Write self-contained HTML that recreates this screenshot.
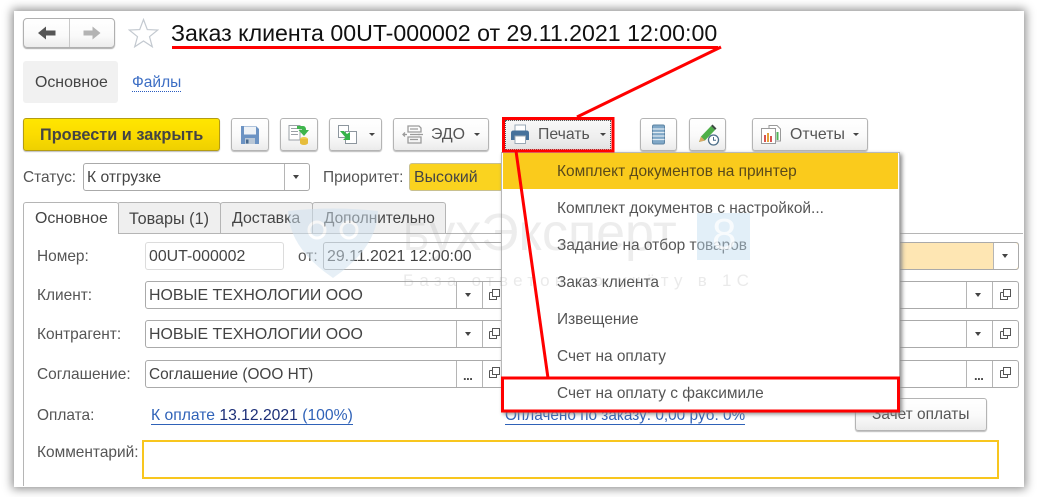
<!DOCTYPE html>
<html><head><meta charset="utf-8">
<style>
*{box-sizing:border-box}
html,body{margin:0;padding:0;width:1038px;height:497px;overflow:hidden;background:#fff}
body{position:relative;font-family:"Liberation Sans",sans-serif;font-size:15.500px;color:#4a4a4a}
.a{position:absolute}
.t{position:absolute;white-space:nowrap;line-height:18px;height:18px}
.val{font-size:15.900px;color:#444}
.btn{position:absolute;top:118px;height:33px;border:1px solid #b4b4b4;border-radius:3px;background:linear-gradient(#fff 0%,#fafafa 55%,#ebebeb 100%);box-shadow:0 1px 1px #bbb}
.f{position:absolute;height:28px;border:1px solid #aaa;border-radius:3px;background:#fff}
.v{position:absolute;top:0;bottom:0;width:1px;background:#b5b5b5}
.tri{position:absolute;width:0;height:0;border-left:3.500px solid transparent;border-right:3.500px solid transparent;border-top:4px solid #444}
.tr2{position:absolute;width:0;height:0;border-left:3px solid transparent;border-right:3px solid transparent;border-top:3px solid #444}
.tab{position:absolute;top:202px;height:31px;border:1px solid #b5b5b5;border-bottom:none;border-radius:3px 3px 0 0;background:#efefef}
.m{position:absolute;left:557px;white-space:nowrap;line-height:18px;color:#555;font-size:15.450px}
.lbl{color:#555;font-size:15.450px}
</style></head><body>

<!-- window -->
<div class="a" style="left:14px;top:11px;width:1010px;height:476px;background:#fff;box-shadow:0 0 9px 2px #8f8f8f"></div>

<!-- nav -->
<div class="a" style="left:23px;top:18px;width:92px;height:30px;border:1px solid #b0b0b0;border-radius:4px;background:linear-gradient(#fff,#fafafa 60%,#ececec);box-shadow:0 1px 1px #aaa"></div>
<div class="a" style="left:69px;top:19px;width:1px;height:28px;background:#c8c8c8"></div>
<svg class="a" style="left:36px;top:24px" width="22" height="18"><path d="M2 9 L10 2.500 V6.500 H19.500 V11.500 H10 V15.500 Z" fill="#555"/></svg>
<svg class="a" style="left:81px;top:24px" width="22" height="18"><path d="M19.500 9 L11.500 2.500 V6.500 H2.500 V11.500 H11.500 V15.500 Z" fill="#b3b3b3"/></svg>
<svg class="a" style="left:128px;top:18px" width="31" height="30"><path d="M15.500 1.500 L19.300 11.600 L29.800 12 L21.500 18.700 L24.300 28.800 L15.500 23 L6.700 28.800 L9.500 18.700 L1.200 12 L11.700 11.600 Z" fill="#fff" stroke="#c3c9d0" stroke-width="1.200"/></svg>

<!-- title -->
<div class="t" id="title" style="left:171px;top:20px;height:26px;line-height:26px;font-size:23.170px;color:#111">Заказ клиента 00UT-000002 от 29.11.2021 12:00:00</div>

<!-- section tabs -->
<div class="a" style="left:23px;top:61px;width:95px;height:42px;background:#f1f1f1;border-radius:3px"></div>
<div class="t val" style="left:35px;top:74px">Основное</div>
<div class="t" style="left:132px;top:74px;color:#3c6ec4;border-bottom:1px dotted #2a5cc0;height:18px;font-size:15.500px">Файлы</div>

<!-- toolbar -->
<div class="a" style="left:23px;top:118px;width:197px;height:33px;border:1px solid #b49c12;border-radius:3px;background:linear-gradient(#ffe600,#fbdc00 50%,#eed000);box-shadow:0 1px 1px #bbb"></div>
<div class="t" style="left:40px;top:126px;font-weight:bold;font-size:16.300px;color:#444">Провести и закрыть</div>

<div class="btn" style="left:231px;width:38px"></div>
<svg class="a" style="left:240px;top:125px" width="20" height="20"><path d="M1 1 H16 L19 4 V19 H1 Z" fill="#6c93c3"/><rect x="4" y="1.500" width="12" height="8" fill="#eef2f6"/><rect x="5" y="13" width="10" height="6" fill="#b9c7d6"/><rect x="6" y="14.500" width="2.500" height="4" fill="#47698f"/></svg>

<div class="btn" style="left:280px;width:38px"></div>
<svg class="a" style="left:288px;top:124px" width="24" height="22"><path d="M1 1.500 H12 V16 H1 Z" fill="#fff" stroke="#9aa0a6"/><path d="M3 4.500H10M3 7.500H10M3 10.500H10" stroke="#9aa0a6"/><path d="M9 2 H15 Q18 2 18 6 H21 L16 12 L10.500 6 H14 Q14 5 12 5 H9 Z" fill="#3fb54d"/><ellipse cx="16" cy="15" rx="4" ry="2" fill="#f0cd4e"/><path d="M12 15 V19 A4 2 0 0 0 20 19 V15 Z" fill="#e6bd3c"/></svg>

<div class="btn" style="left:329px;width:53px"></div>
<svg class="a" style="left:337px;top:124px" width="24" height="22"><rect x="1.500" y="1.500" width="10" height="12" fill="#fff" stroke="#8d969e"/><rect x="8.500" y="7.500" width="11" height="12" fill="#fff" stroke="#8d969e"/><path d="M3 7 H7 L10 10 L13 8 V16 H6 L8.500 13.500 Z" fill="#36b34a"/></svg>
<div class="tr2" style="left:369px;top:133px"></div>

<div class="btn" style="left:393px;width:96px"></div>
<svg class="a" style="left:402px;top:124px" width="22" height="22" fill="none" stroke="#9b9b9b" stroke-width="1.300"><path d="M6 2 H17 L19 4 V8 H6 Z M6 13 H19 V19 H6 Z M8 5 H16 M8 15.500 H16 M8 10.500 H18"/><path d="M1 10.500 H5 M3 8.500 L1 10.500 L3 12.500 M16 10.500 H21"/></svg>
<div class="t" style="left:431px;top:126px;color:#555;font-size:15.900px">ЭДО</div>
<div class="tr2" style="left:474px;top:133px"></div>

<div class="btn" style="left:505px;top:120px;width:106px;height:30px;border:1px dotted #555;background:linear-gradient(#f8f8f8,#eeeeee 60%,#e2e2e2);box-shadow:none;border-radius:0"></div>
<svg class="a" style="left:510px;top:124px" width="21" height="21"><rect x="5" y="1" width="10.500" height="7" fill="#fff" stroke="#9aa8b5"/><path d="M1 9 Q1 6.500 3.500 6.500 H16.500 Q19 6.500 19 9 V16 H1 Z" fill="#46719b"/><rect x="5" y="12" width="10.500" height="7.500" fill="#fff" stroke="#9aa8b5"/></svg>
<div class="t" style="left:538px;top:126px;color:#555;font-size:15.800px">Печать</div>
<div class="tr2" style="left:600px;top:133px"></div>

<div class="btn" style="left:640px;width:37px"></div>
<svg class="a" style="left:651px;top:124px" width="16" height="21"><rect x="1.500" y="1" width="12" height="19" rx="1.500" fill="#7fa7c7" stroke="#5d84a3"/><path d="M1.500 5H13.500M1.500 8.500H13.500M1.500 12H13.500M1.500 15.500H13.500" stroke="#dfeaf2" stroke-width="1.200"/></svg>

<div class="btn" style="left:689px;width:37px"></div>
<svg class="a" style="left:697px;top:123px" width="24" height="24"><path d="M2 19 L4 13.500 L14 3 L18 7 L8 17.500 Z" fill="#4eaf48"/><path d="M2 19 L4 13.500 L8 17.500 Z" fill="#d9a765"/><path d="M14 3 L15.500 1.500 L19.500 5.500 L18 7 Z" fill="#3d4a42"/><circle cx="16.500" cy="17" r="5" fill="#fff" stroke="#4b6d88" stroke-width="1.300"/><path d="M16.500 14V17.300H19" stroke="#4b6d88" fill="none"/></svg>

<div class="btn" style="left:752px;width:116px"></div>
<svg class="a" style="left:760px;top:124px" width="24" height="22"><path d="M9 1.500 H17 L20.500 5 V17 H9 Z" fill="#fff" stroke="#9a9a9a"/><rect x="1.500" y="4.500" width="14" height="15" fill="#fff" stroke="#9a9a9a"/><rect x="4" y="11" width="2" height="7" fill="#d9534f"/><rect x="7" y="9" width="2" height="9" fill="#e3a03a"/><rect x="10" y="12" width="2" height="6" fill="#d9534f"/><rect x="16.500" y="8" width="2" height="8" fill="#4fb35a"/></svg>
<div class="t" style="left:790px;top:126px;color:#555;font-size:15.900px">Отчеты</div>
<div class="tr2" style="left:853px;top:133px"></div>

<!-- status -->
<div class="t lbl" style="left:23px;top:169px">Статус:</div>
<div class="f" style="left:83px;top:163px;width:227px"><div class="v" style="left:200px"></div><div class="tri" style="left:209px;top:11px"></div></div>
<div class="t val" style="left:87px;top:169px;font-size:15.700px">К отгрузке</div>
<div class="t lbl" style="left:323px;top:169px">Приоритет:</div>
<div class="f" style="left:409px;top:163px;width:100px;background:#fad31f;border-color:#c8c090"></div>
<div class="t val" style="left:414px;top:169px">Высокий</div>

<!-- tabs -->
<div class="a" style="left:23px;top:233px;width:1000px;height:1px;background:#b5b5b5"></div>
<div class="a" style="left:23px;top:233px;width:1px;height:253px;background:#b5b5b5"></div>
<div class="tab" style="left:117px;width:104px"></div>
<div class="tab" style="left:220px;width:93px"></div>
<div class="tab" style="left:312px;width:134px"></div>
<div class="tab" style="left:23px;width:96px;height:32px;background:#fff"></div>
<div class="t val" style="left:35px;top:210px">Основное</div>
<div class="t val" style="left:129px;top:210px;font-size:16.200px">Товары (1)</div>
<div class="t val" style="left:232px;top:210px">Доставка</div>
<div class="t val" style="left:324px;top:210px;font-size:15.400px">Дополнительно</div>

<!-- form -->
<div class="t lbl" style="left:37px;top:248px">Номер:</div>
<div class="f" style="left:145px;top:242px;width:139px;border-color:#dcdcdc"></div>
<div class="t val" style="left:149px;top:248px">00UT-000002</div>
<div class="t lbl" style="left:298px;top:248px">от:</div>
<div class="f" style="left:323px;top:242px;width:190px"></div>
<div class="t val" style="left:327px;top:248px">29.11.2021 12:00:00</div>
<div class="f" style="left:880px;top:242px;width:139px;background:#fee6b3"><div class="a" style="left:112px;top:0;right:0;bottom:0;background:#fff;border-left:1px solid #b5b5b5;border-radius:0 3px 3px 0"></div><div class="tri" style="left:121px;top:11px"></div></div>

<div class="t lbl" style="left:37px;top:287px">Клиент:</div>
<div class="f" style="left:145px;top:281px;width:370px"><div class="v" style="left:310px"></div><div class="v" style="left:336px"></div><div class="tri" style="left:319px;top:11px"></div></div>
<div class="t val" style="left:149px;top:287px">НОВЫЕ ТЕХНОЛОГИИ ООО</div>
<svg class="a" style="left:488px;top:288px" width="13" height="13" fill="none" stroke="#555"><path d="M4.500 1.500H11.500V8.500H4.500Z M1.500 4.500H4.500 M1.500 4.500V11.500H8.500V8.500"/></svg>

<div class="t lbl" style="left:37px;top:326px">Контрагент:</div>
<div class="f" style="left:145px;top:320px;width:370px"><div class="v" style="left:310px"></div><div class="v" style="left:336px"></div><div class="tri" style="left:319px;top:11px"></div></div>
<div class="t val" style="left:149px;top:326px">НОВЫЕ ТЕХНОЛОГИИ ООО</div>
<svg class="a" style="left:488px;top:327px" width="13" height="13" fill="none" stroke="#555"><path d="M4.500 1.500H11.500V8.500H4.500Z M1.500 4.500H4.500 M1.500 4.500V11.500H8.500V8.500"/></svg>

<div class="t lbl" style="left:37px;top:366px">Соглашение:</div>
<div class="f" style="left:145px;top:360px;width:370px"><div class="v" style="left:310px"></div><div class="v" style="left:336px"></div></div>
<div class="t val" style="left:149px;top:366px;font-size:15.400px">Соглашение (ООО НТ)</div>
<div class="t" style="left:463px;top:367px;color:#444;font-weight:bold;font-size:13px;letter-spacing:-.5px">...</div>
<svg class="a" style="left:488px;top:366px" width="13" height="13" fill="none" stroke="#555"><path d="M4.500 1.500H11.500V8.500H4.500Z M1.500 4.500H4.500 M1.500 4.500V11.500H8.500V8.500"/></svg>

<!-- right columns -->
<div class="f" style="left:880px;top:281px;width:139px"><div class="v" style="left:85px"></div><div class="v" style="left:111px"></div><div class="tri" style="left:94px;top:11px"></div></div>
<svg class="a" style="left:999px;top:288px" width="13" height="13" fill="none" stroke="#555"><path d="M4.500 1.500H11.500V8.500H4.500Z M1.500 4.500H4.500 M1.500 4.500V11.500H8.500V8.500"/></svg>
<div class="f" style="left:880px;top:320px;width:139px"><div class="v" style="left:85px"></div><div class="v" style="left:111px"></div><div class="tri" style="left:94px;top:11px"></div></div>
<svg class="a" style="left:999px;top:327px" width="13" height="13" fill="none" stroke="#555"><path d="M4.500 1.500H11.500V8.500H4.500Z M1.500 4.500H4.500 M1.500 4.500V11.500H8.500V8.500"/></svg>
<div class="f" style="left:880px;top:360px;width:139px"><div class="v" style="left:85px"></div><div class="v" style="left:111px"></div></div>
<div class="t" style="left:974px;top:367px;color:#444;font-weight:bold;font-size:13px;letter-spacing:-.5px">...</div>
<svg class="a" style="left:999px;top:366px" width="13" height="13" fill="none" stroke="#555"><path d="M4.500 1.500H11.500V8.500H4.500Z M1.500 4.500H4.500 M1.500 4.500V11.500H8.500V8.500"/></svg>

<div class="t lbl" style="left:37px;top:407px">Оплата:</div>
<div class="t" style="left:151px;top:407px;color:#2f62b8;border-bottom:1px solid #2f62b8;height:18px;font-size:15.700px">К оплате <span style="color:#1c2f78">13.12.2021</span> (100%)</div>
<div class="t" style="left:505px;top:407px;color:#2f62b8;border-bottom:1px solid #2f62b8;height:18px;font-size:15.350px">Оплачено по заказу: 0,00 руб. 0%</div>
<div class="btn" style="left:855px;top:398px;width:132px;height:33px"></div>
<div class="t lbl" style="left:872px;top:406px">Зачет оплаты</div>
<div class="t lbl" style="left:37px;top:444px">Комментарий:</div>
<div class="a" style="left:142px;top:440px;width:857px;height:39px;border:2px solid #f8c61e;background:#fff"></div>

<!-- menu -->
<div class="a" style="left:501px;top:152px;width:399px;height:260px;background:#fff;border:1px solid #b8b8b8;box-shadow:2px 2px 4px #888"></div>
<div class="a" style="left:503px;top:153px;width:395px;height:36px;background:#facb1c"></div>
<div class="m" style="top:163px;color:#5a4a1a">Комплект документов на принтер</div>
<div class="m" style="top:200px">Комплект документов с настройкой...</div>
<div class="m" style="top:237px">Задание на отбор товаров</div>
<div class="m" style="top:274px">Заказ клиента</div>
<div class="m" style="top:311px">Извещение</div>
<div class="m" style="top:348px">Счет на оплату</div>
<div class="m" style="top:385px">Счет на оплату с факсимиле</div>

<!-- watermark -->
<svg class="a" style="left:287px;top:208px;opacity:.5" width="92" height="72"><path d="M1 3 Q46 -2 91 3 Q90 40 46 70 Q2 40 1 3 Z" fill="#cfe1ef"/><circle cx="30" cy="22" r="8" fill="none" stroke="#fff" stroke-width="3"/><circle cx="62" cy="22" r="8" fill="none" stroke="#fff" stroke-width="3"/></svg>
<div class="t" style="left:403px;top:203px;height:60px;line-height:60px;font-size:52px;color:rgba(150,150,150,.17)"><span style="font-size:40px">Б</span>ухЭксперт</div>
<div class="t" style="left:403px;top:270px;height:22px;line-height:22px;font-size:17px;letter-spacing:5.250px;color:rgba(150,150,150,.2)">База ответов по учёту в 1С</div>
<div class="a" style="left:697px;top:213px;width:53px;height:47px;background:rgba(190,220,240,.45)"></div>
<div class="t" style="left:712px;top:210px;height:50px;line-height:50px;font-size:44px;color:rgba(255,255,255,.75)">8</div>

<!-- red annotations -->
<svg class="a" style="left:0;top:0" width="1038" height="497">
<path d="M172 47.500 H718" stroke="#f00" stroke-width="3"/>
<path d="M721 47 L577 117" stroke="#f00" stroke-width="3"/>
<path d="M516 151 L548 378" stroke="#f00" stroke-width="3"/>
<rect x="503.500" y="118.500" width="109.500" height="32.500" fill="none" stroke="#f00" stroke-width="3"/>
<rect x="502.500" y="378" width="396" height="33" fill="none" stroke="#f00" stroke-width="3"/>
</svg>
</body></html>
